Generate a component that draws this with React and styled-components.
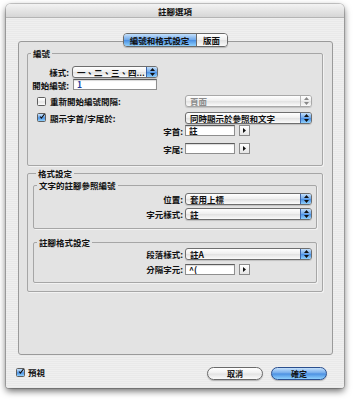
import React from 'react';
import styled, { createGlobalStyle } from 'styled-components';

const GlobalStyle = createGlobalStyle`
  html, body {
    margin: 0;
    padding: 0;
    background: #ffffff;
  }
  body {
    font-family: "Noto Sans CJK TC", "Noto Sans CJK SC", sans-serif;
    font-size: 8.5px;
    color: #111111;
  }
`;

const AQUA_BLUE = 'linear-gradient(#c4e0fb 0%, #6fa8ea 48%, #4a8fe2 52%, #8fd0fd 100%)';
const AQUA_WHITE = 'linear-gradient(#ffffff 0%, #efefef 48%, #e2e2e2 52%, #fbfbfb 100%)';

const Page = styled.div`
  width: 360px;
  height: 401px;
  padding: 4px 0 0 6px;
  box-sizing: border-box;
`;

const Window = styled.div`
  width: 338px;
  height: 384px;
  border-radius: 5px 5px 3px 3px;
  background: repeating-linear-gradient(#efefef 0 1px, #e9e9e9 1px 2px);
  box-shadow: 0 3px 7px rgba(0, 0, 0, 0.6), 0 0 0 1px rgba(0, 0, 0, 0.18);
  display: flex;
  flex-direction: column;
  overflow: hidden;
`;

const TitleBar = styled.div`
  height: 14px;
  flex: none;
  display: flex;
  align-items: center;
  justify-content: center;
  background: linear-gradient(#f3f3f3, #d6d6d6);
  border-bottom: 1px solid #b4b4b4;
  font-weight: bold;
  line-height: 10px;
  padding-top: 1px;
  box-sizing: border-box;
`;

const TabBar = styled.div`
  align-self: center;
  margin-top: 15px;
  height: 14px;
  display: flex;
  box-sizing: border-box;
  border: 1px solid #6a6a6a;
  border-radius: 4px;
  overflow: hidden;
  position: relative;
  z-index: 1;
  box-shadow: 0 1px 1px rgba(0, 0, 0, 0.2);
`;

const Tab = styled.div`
  width: ${p => p.$w}px;
  display: flex;
  align-items: center;
  justify-content: center;
  font-weight: bold;
  line-height: 10px;
  background: ${p => (p.$active ? AQUA_BLUE : AQUA_WHITE)};
  border-left: ${p => (p.$first ? 'none' : '1px solid #6a6a6a')};
`;

const Panel = styled.div`
  margin: -6px 11px 0 12px;
  height: 314px;
  box-sizing: border-box;
  border: 1px solid #9a9a9a;
  border-radius: 3px;
  background: #e3e3e3;
  padding: 6px 9px 0 8px;
  display: flex;
  flex-direction: column;
`;

const Group = styled.fieldset`
  margin: ${p => p.$mt || 0}px 0 0 0;
  padding: ${p => p.$pt}px ${p => p.$px || 0}px ${p => p.$pb}px;
  border: 1px solid #a6a6a6;
  border-radius: 2px;
  min-width: 0;
  box-shadow: 1px 1px 0 rgba(255, 255, 255, 0.55);
`;

const Legend = styled.legend`
  margin-left: 3px;
  padding: 0 2px;
  line-height: 10px;
  font-weight: bold;
`;

const Row = styled.div`
  display: flex;
  align-items: center;
  height: ${p => p.$h}px;
  margin-top: ${p => p.$mt || 0}px;
`;

const Label = styled.span`
  width: ${p => p.$w}px;
  flex: none;
  box-sizing: border-box;
  text-align: right;
  padding-right: 2px;
  font-weight: bold;
  line-height: 10px;
  white-space: nowrap;
`;

const CheckCell = styled.label`
  width: ${p => p.$w}px;
  flex: none;
  display: flex;
  align-items: center;
  padding-left: 9px;
  box-sizing: border-box;
  font-weight: bold;
  line-height: 10px;
  gap: 4px;
`;

const Box = styled.span`
  width: 9px;
  height: 9px;
  flex: none;
  box-sizing: border-box;
  border: 1px solid #5f5f5f;
  border-radius: 1.5px;
  background: ${p => (p.$checked ? AQUA_BLUE : AQUA_WHITE)};
  display: flex;
  align-items: center;
  justify-content: center;
  overflow: visible;
`;

const Checkbox = ({ checked }) => (
  <Box $checked={checked}>
    {checked && (
      <svg width="9" height="9" viewBox="0 0 9 9" style={{ marginTop: -2, marginLeft: 1 }}>
        <path d="M1.5 4.5 L3.6 7 L8.5 0.5" fill="none" stroke="#111" strokeWidth="1.6" />
      </svg>
    )}
  </Box>
);

const PopupBox = styled.div`
  width: ${p => p.$w}px;
  height: 12px;
  flex: none;
  margin-left: ${p => p.$ml || 0}px;
  box-sizing: border-box;
  border: 1px solid ${p => (p.$disabled ? '#a8a8a8' : '#6e6e6e')};
  border-radius: 3px;
  background: ${AQUA_WHITE};
  display: flex;
  align-items: stretch;
  overflow: hidden;
  box-shadow: 0 1px 1px rgba(0, 0, 0, 0.15);
`;

const PopupText = styled.span`
  flex: 1;
  min-width: 0;
  padding-left: 4px;
  font-weight: bold;
  line-height: 10px;
  white-space: nowrap;
  overflow: hidden;
  color: ${p => (p.$disabled ? '#8c8c8c' : '#111')};
`;

const PopupCap = styled.span`
  width: 10px;
  flex: none;
  display: flex;
  align-items: center;
  justify-content: center;
  border-left: 1px solid ${p => (p.$disabled ? '#b8b8b8' : '#3c64a8')};
  background: ${p => (p.$disabled ? AQUA_WHITE : AQUA_BLUE)};
`;

const Popup = ({ w, ml, disabled, children }) => (
  <PopupBox $w={w} $ml={ml} $disabled={disabled}>
    <PopupText $disabled={disabled}>{children}</PopupText>
    <PopupCap $disabled={disabled}>
      <svg width="5" height="8" viewBox="0 0 5 8">
        <path d="M2.5 0 L5 3 L0 3 Z M2.5 8 L5 5 L0 5 Z" fill={disabled ? '#888' : '#111'} />
      </svg>
    </PopupCap>
  </PopupBox>
);

const TextField = styled.div`
  width: ${p => p.$w}px;
  height: 11px;
  flex: none;
  margin-left: ${p => p.$ml || 0}px;
  box-sizing: border-box;
  background: #ffffff;
  border: 1px solid #8e8e8e;
  border-top-color: #5c5c5c;
  box-shadow: inset 0 1px 1px rgba(0, 0, 0, 0.15);
  padding-left: 3px;
  font-weight: bold;
  line-height: 9px;
  color: ${p => p.$color || '#111'};
  white-space: nowrap;
  overflow: hidden;
`;

const ArrowButton = styled.div`
  width: 11px;
  height: 11px;
  flex: none;
  margin-left: 4px;
  box-sizing: border-box;
  border: 1px solid #8a8a8a;
  background: linear-gradient(#ffffff, #e4e4e4);
  display: flex;
  align-items: center;
  justify-content: center;
`;

const Arrow = () => (
  <ArrowButton>
    <svg width="3" height="5" viewBox="0 0 3 5">
      <path d="M0 0 L3 2.5 L0 5 Z" fill="#111" />
    </svg>
  </ArrowButton>
);

const BottomBar = styled.div`
  margin-top: 12px;
  height: 13px;
  padding: 0 17px 0 10px;
  display: flex;
  align-items: center;
  gap: 8px;
`;

const PreviewCheck = styled.label`
  display: flex;
  align-items: center;
  gap: 3px;
  font-weight: bold;
  line-height: 10px;
  margin-right: auto;
  margin-top: -3px;
`;

const Button = styled.div`
  width: 56px;
  height: 13px;
  box-sizing: border-box;
  border: 1px solid ${p => (p.$primary ? '#2b4f8e' : '#6a6a6a')};
  border-radius: 7px;
  background: ${p => (p.$primary ? AQUA_BLUE : AQUA_WHITE)};
  display: flex;
  align-items: center;
  justify-content: center;
  font-weight: bold;
  font-size: 8px;
  line-height: 10px;
  box-shadow: 0 1px 1px rgba(0, 0, 0, 0.25);
`;

const App = () => (
  <Page>
    <GlobalStyle />
    <Window>
      <TitleBar>註腳選項</TitleBar>
      <TabBar>
        <Tab $w={72} $active $first>編號和格式設定</Tab>
        <Tab $w={30}>版面</Tab>
      </TabBar>
      <Panel>
        <Group $pt={8} $pb={11}>
          <Legend>編號</Legend>
          <Row $h={12}>
            <Label $w={43}>樣式:</Label>
            <Popup w={86} ml={1}>一、二、三、四...</Popup>
          </Row>
          <Row $h={11} $mt={1}>
            <Label $w={43}>開始編號:</Label>
            <TextField $w={84} $ml={2} $color="#1d3f9e">1</TextField>
          </Row>
          <Row $h={12} $mt={5}>
            <CheckCell $w={157}>
              <Checkbox />
              重新開始編號間隔:
            </CheckCell>
            <Popup w={127} disabled>頁面</Popup>
          </Row>
          <Row $h={11} $mt={5}>
            <CheckCell $w={157}>
              <Checkbox checked />
              顯示字首/字尾於:
            </CheckCell>
            <Popup w={127}>同時顯示於參照和文字</Popup>
          </Row>
          <Row $h={11} $mt={2}>
            <Label $w={157}>字首:</Label>
            <TextField $w={50}>註</TextField>
            <Arrow />
          </Row>
          <Row $h={11} $mt={7}>
            <Label $w={157}>字尾:</Label>
            <TextField $w={50} />
            <Arrow />
          </Row>
        </Group>
        <Group $mt={2} $pt={2} $px={5} $pb={8}>
          <Legend>格式設定</Legend>
          <Group $pt={3} $pb={8}>
            <Legend>文字的註腳參照編號</Legend>
            <Row $h={12}>
              <Label $w={151}>位置:</Label>
              <Popup w={127}>套用上標</Popup>
            </Row>
            <Row $h={12} $mt={3}>
              <Label $w={151}>字元樣式:</Label>
              <Popup w={127}>註</Popup>
            </Row>
          </Group>
          <Group $mt={8} $pt={1} $pb={7}>
            <Legend>註腳格式設定</Legend>
            <Row $h={12}>
              <Label $w={151}>段落樣式:</Label>
              <Popup w={127}>註A</Popup>
            </Row>
            <Row $h={12} $mt={3}>
              <Label $w={151}>分隔字元:</Label>
              <TextField $w={50}>^(</TextField>
              <Arrow />
            </Row>
          </Group>
        </Group>
      </Panel>
      <BottomBar>
        <PreviewCheck>
          <Checkbox checked />
          預視
        </PreviewCheck>
        <Button>取消</Button>
        <Button $primary>確定</Button>
      </BottomBar>
    </Window>
  </Page>
);

export default App;
